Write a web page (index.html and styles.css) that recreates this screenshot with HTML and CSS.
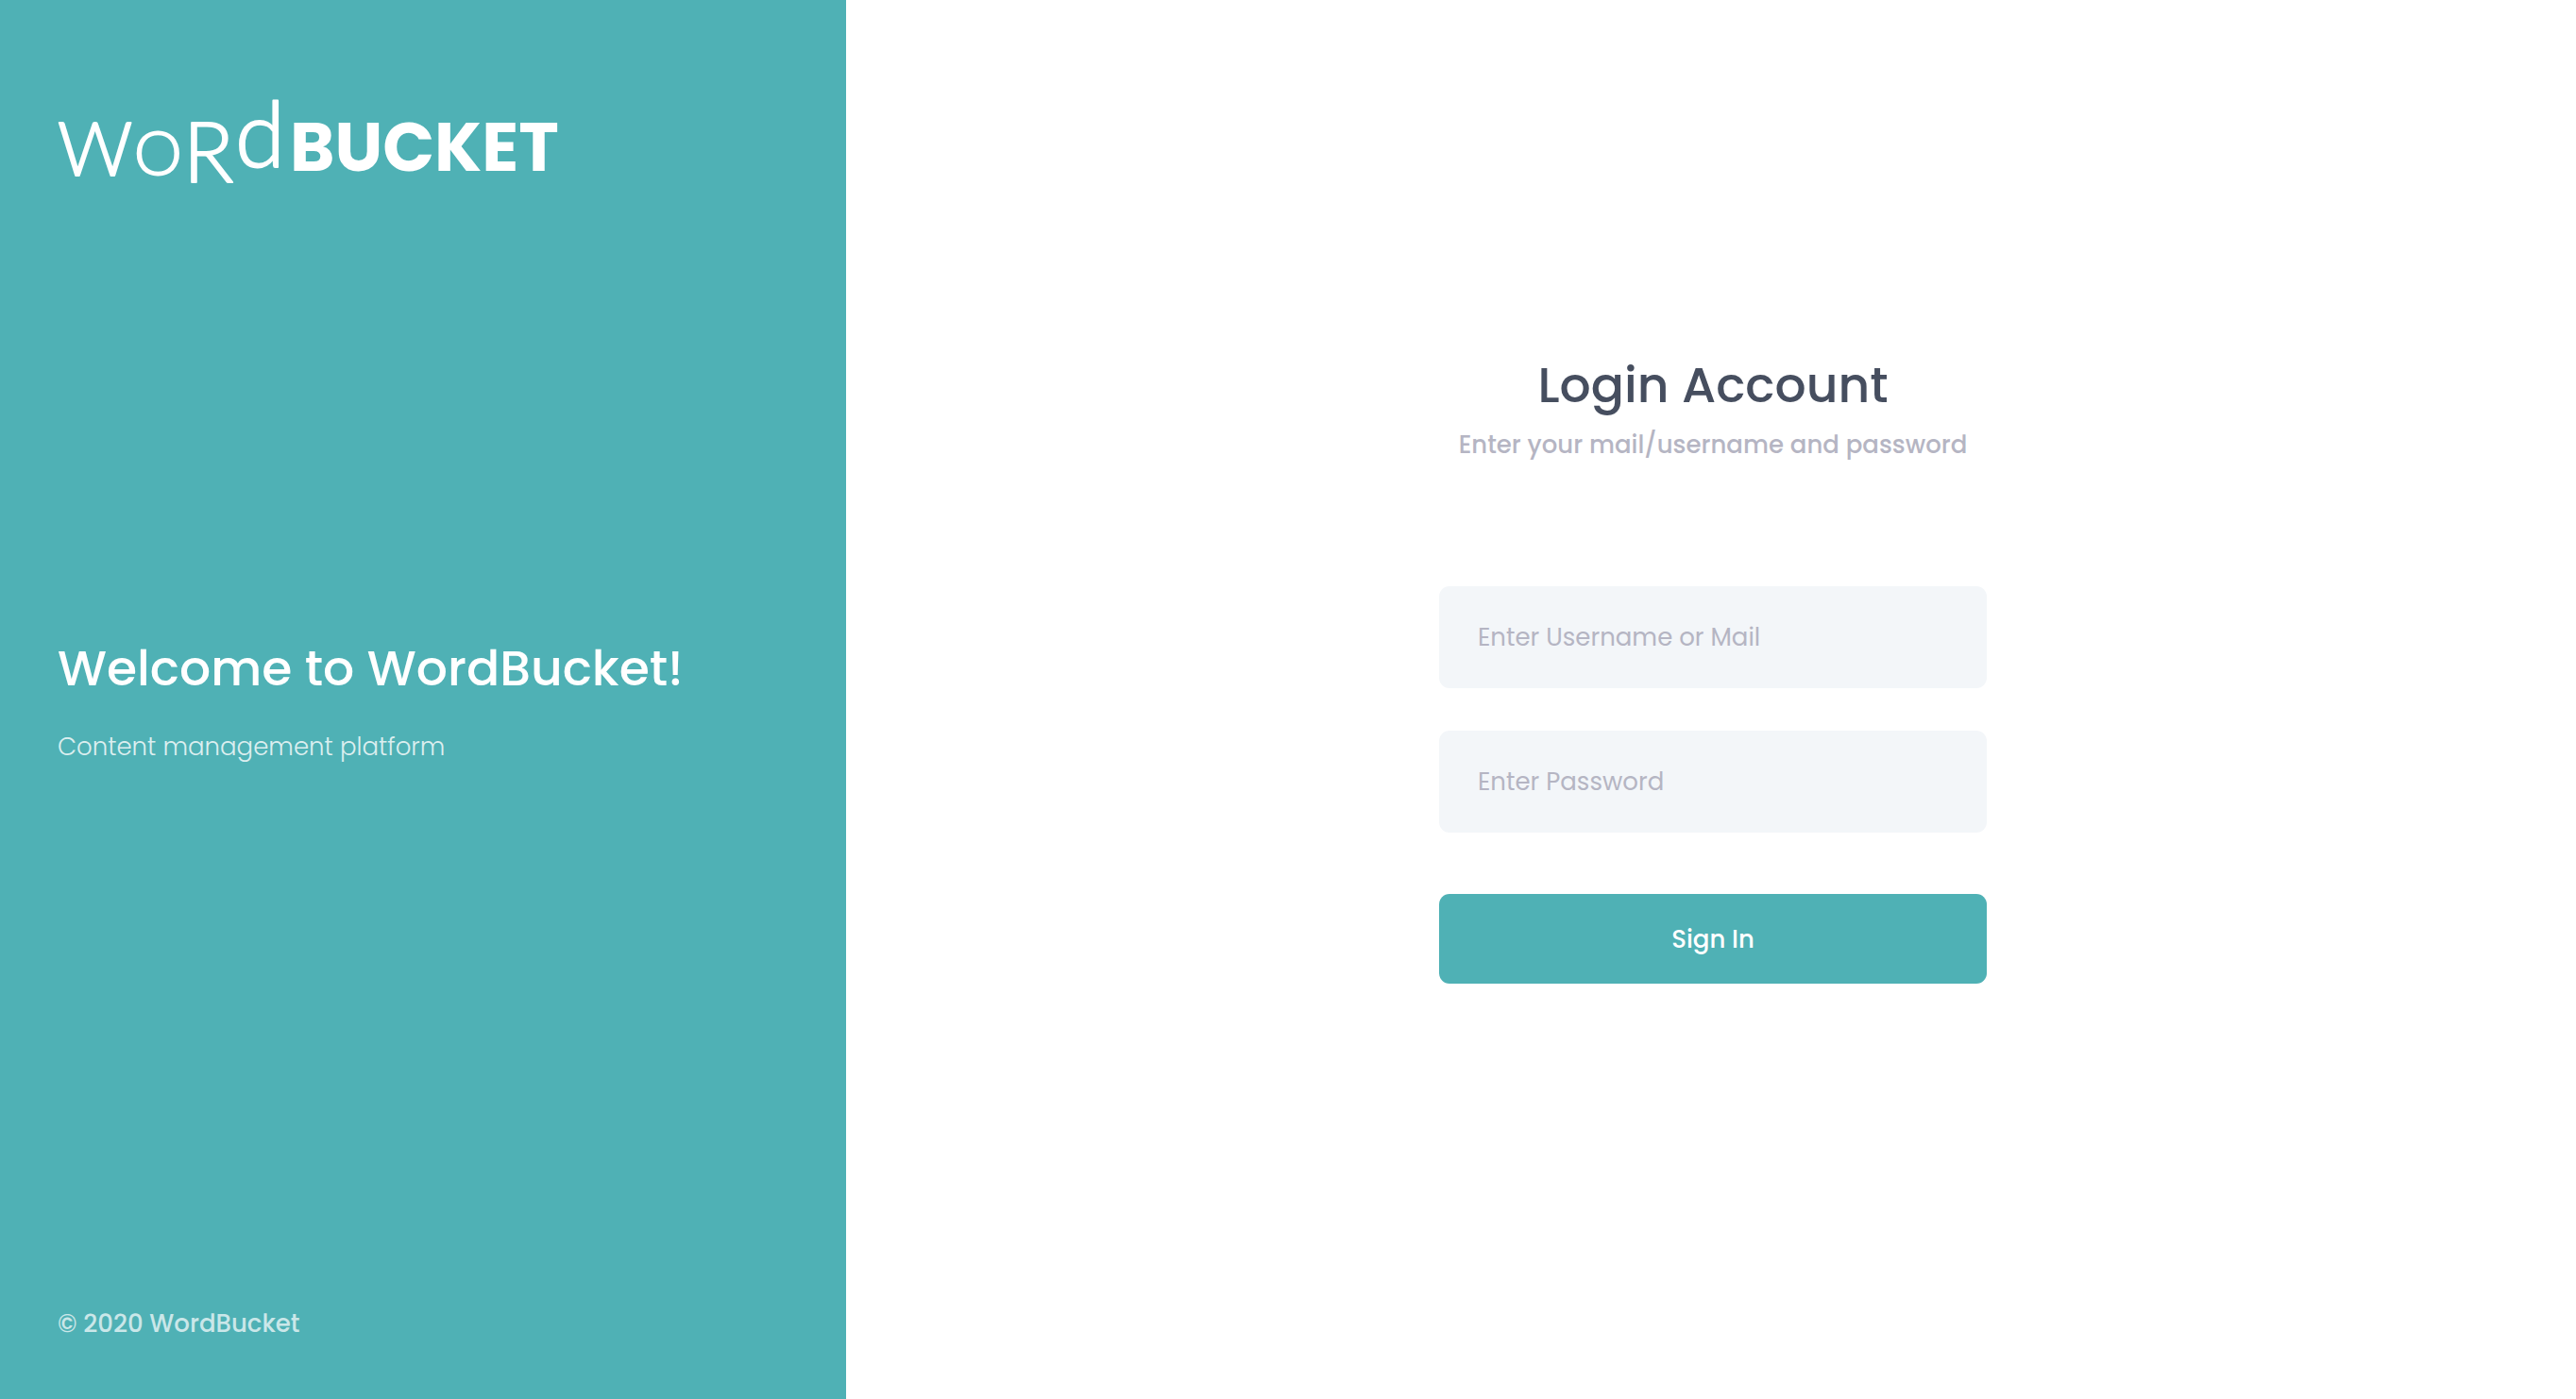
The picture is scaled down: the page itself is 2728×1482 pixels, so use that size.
FILE: index.html
```html
<!DOCTYPE html>
<html lang="en">
<head>
<meta charset="utf-8">
<meta name="viewport" content="width=device-width, initial-scale=1">
<title>WordBucket</title>
<link rel="stylesheet" href="styles.css">
</head>
<body>
<div class="page">
  <aside class="aside">
    <a class="logo" href="#" aria-label="WordBucket">
      <svg class="logo-mark" viewBox="0 0 560 104">
        <text class="logo-hand" font-size="78" x="0" y="92">W</text>
        <text class="logo-hand" font-size="64" x="81" y="91">O</text>
        <text class="logo-hand" font-size="88" x="133" y="99">R</text>
        <text class="logo-hand" font-size="96" x="188" y="83">d</text>
        <text class="logo-bold" font-size="72" x="246" y="87">BUCKET</text>
      </svg>
    </a>
    <div class="intro">
      <h1 class="title">Welcome to WordBucket!</h1>
      <p class="tagline">Content management platform</p>
    </div>
    <footer class="copyright">© 2020 WordBucket</footer>
  </aside>
  <main class="main">
    <form class="form">
      <header class="form-head">
        <h2 class="title">Login Account</h2>
        <p class="hint">Enter your mail/username and password</p>
      </header>
      <input class="field" type="text" placeholder="Enter Username or Mail" aria-label="Username or mail">
      <input class="field" type="password" placeholder="Enter Password" aria-label="Password">
      <button class="submit" type="submit">Sign In</button>
    </form>
  </main>
</div>
</body>
</html>
```
FILE: styles.css
```css
* { box-sizing: border-box; }

body {
  margin: 0;
  background: #fff;
  font-family: Poppins, Inter, "Noto Sans", sans-serif;
  font-size: 26px;
  line-height: 40px;
}

.page {
  display: grid;
  grid-template-columns: 112fr 229fr;
  min-height: 100vh;
}

.aside {
  display: flex;
  flex-direction: column;
  justify-content: space-between;
  padding: 94px 61px 60px;
  background: #4fb1b5;
  color: #fff;
}

.logo { display: block; }

.logo-mark {
  display: block;
  width: 100%;
  max-width: 560px;
  fill: #fff;
  overflow: visible;
}

.logo-hand {
  font-family: Lato, sans-serif;
  font-weight: 300;
  stroke: #fff;
  stroke-width: 2px;
  stroke-linejoin: round;
}

.logo-bold {
  font-family: Poppins, Inter, sans-serif;
  font-weight: 700;
}

.intro { margin-bottom: 94px; }

.title {
  margin: 0;
  font-size: 52px;
  font-weight: 500;
  line-height: 64px;
}

.tagline {
  margin: 31px 0 0;
  font-weight: 300;
  opacity: 0.8;
}

.copyright {
  font-weight: 500;
  opacity: 0.7;
}

.main {
  display: flex;
  justify-content: center;
  padding: 376px 24px 60px 28px;
}

.form {
  width: 100%;
  max-width: 580px;
}

.form-head {
  margin-bottom: 130px;
  text-align: center;
  color: #464e5f;
}

.hint {
  margin: 11px 0 0;
  color: #b5b5c3;
  font-weight: 500;
}

.field,
.submit {
  display: block;
  width: 100%;
  border: 0;
  border-radius: 11px;
  font: inherit;
}

.field {
  height: 108px;
  margin-bottom: 45px;
  padding: 0 41px;
  background: #f3f6f9;
  color: #464e5f;
}

.field::placeholder {
  color: #b5b5c3;
  opacity: 1;
}

.submit {
  height: 95px;
  margin-top: 65px;
  background: #4fb1b5;
  color: #fff;
  font-weight: 500;
  cursor: pointer;
}
```
